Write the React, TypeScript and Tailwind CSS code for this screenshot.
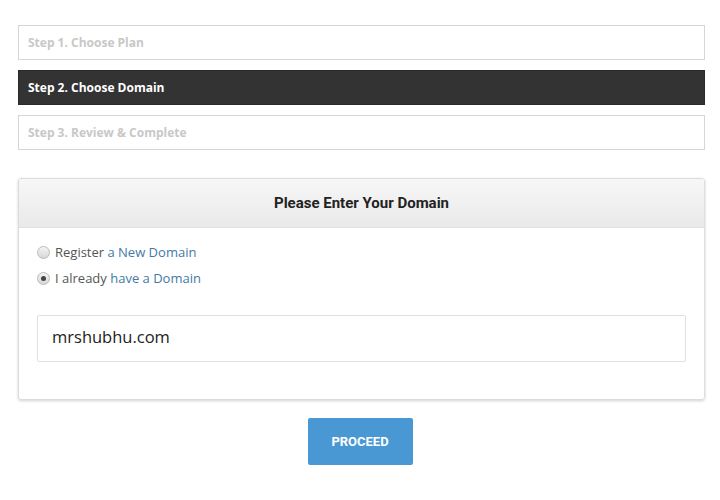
import type { FC } from "react";

const steps = [
  { label: "Step 1. Choose Plan", active: false },
  { label: "Step 2. Choose Domain", active: true },
  { label: "Step 3. Review & Complete", active: false },
];

const Radio: FC<{ checked?: boolean }> = ({ checked }) => (
  <span className="flex h-[13px] w-[13px] items-center justify-center rounded-full border border-[#b9b9b9] bg-gradient-to-b from-[#f4f4f4] to-[#d8d8d8]">
    {checked && <span className="h-[5px] w-[5px] rounded-full bg-[#444]" />}
  </span>
);

const App: FC = () => {
  return (
    <div className="min-h-[500px] w-[720px] bg-white font-['Open_Sans',sans-serif]">
      <div className="ml-[18px] flex w-[687px] flex-col gap-[10px] pt-[25px]">
        {steps.map((step) =>
          step.active ? (
            <div
              key={step.label}
              className="flex h-[35px] items-center border border-[#2a2a2a] bg-[#333] px-[9px] text-[12px] font-bold text-white"
            >
              {step.label}
            </div>
          ) : (
            <div
              key={step.label}
              className="flex h-[35px] items-center border border-[#d6d6d6] bg-white px-[9px] text-[12px] font-bold text-[#c8c8c8]"
            >
              {step.label}
            </div>
          )
        )}
      </div>

      <div className="ml-[18px] mt-[28px] w-[687px] overflow-hidden rounded-[3px] border border-[#dcdcdc] shadow-[0_1px_3px_rgba(0,0,0,0.18)]">
        <div className="flex h-[49px] items-center justify-center border-b border-[#e2e2e2] bg-gradient-to-b from-[#f7f7f7] to-[#e9e9e9] font-['Roboto',sans-serif] text-[15px] font-bold text-[#222]">
          Please Enter Your Domain
        </div>
        <div className="px-[18px] pb-[37px] pt-[16px]">
          <div className="flex flex-col gap-[9px] text-[13px] text-[#555]">
            <label className="flex h-[17px] items-center gap-[5px]">
              <Radio />
              <span>
                Register <span className="text-[#3f7aa8]">a New Domain</span>
              </span>
            </label>
            <label className="flex h-[17px] items-center gap-[5px]">
              <Radio checked />
              <span>
                I already <span className="text-[#3f7aa8]">have a Domain</span>
              </span>
            </label>
          </div>
          <div className="mt-[28px] flex h-[47px] items-center rounded-[2px] border border-[#e0e0e0] px-[14px] pb-[2px] text-[16.5px] text-[#222]">
            mrshubhu.com
          </div>
        </div>
      </div>

      <div className="mt-[18px] flex justify-center">
        <button className="h-[47px] w-[105px] rounded-[2px] bg-[#4a98d3] font-['Roboto',sans-serif] text-[13px] font-bold text-white">
          PROCEED
        </button>
      </div>
    </div>
  );
};

export default App;
